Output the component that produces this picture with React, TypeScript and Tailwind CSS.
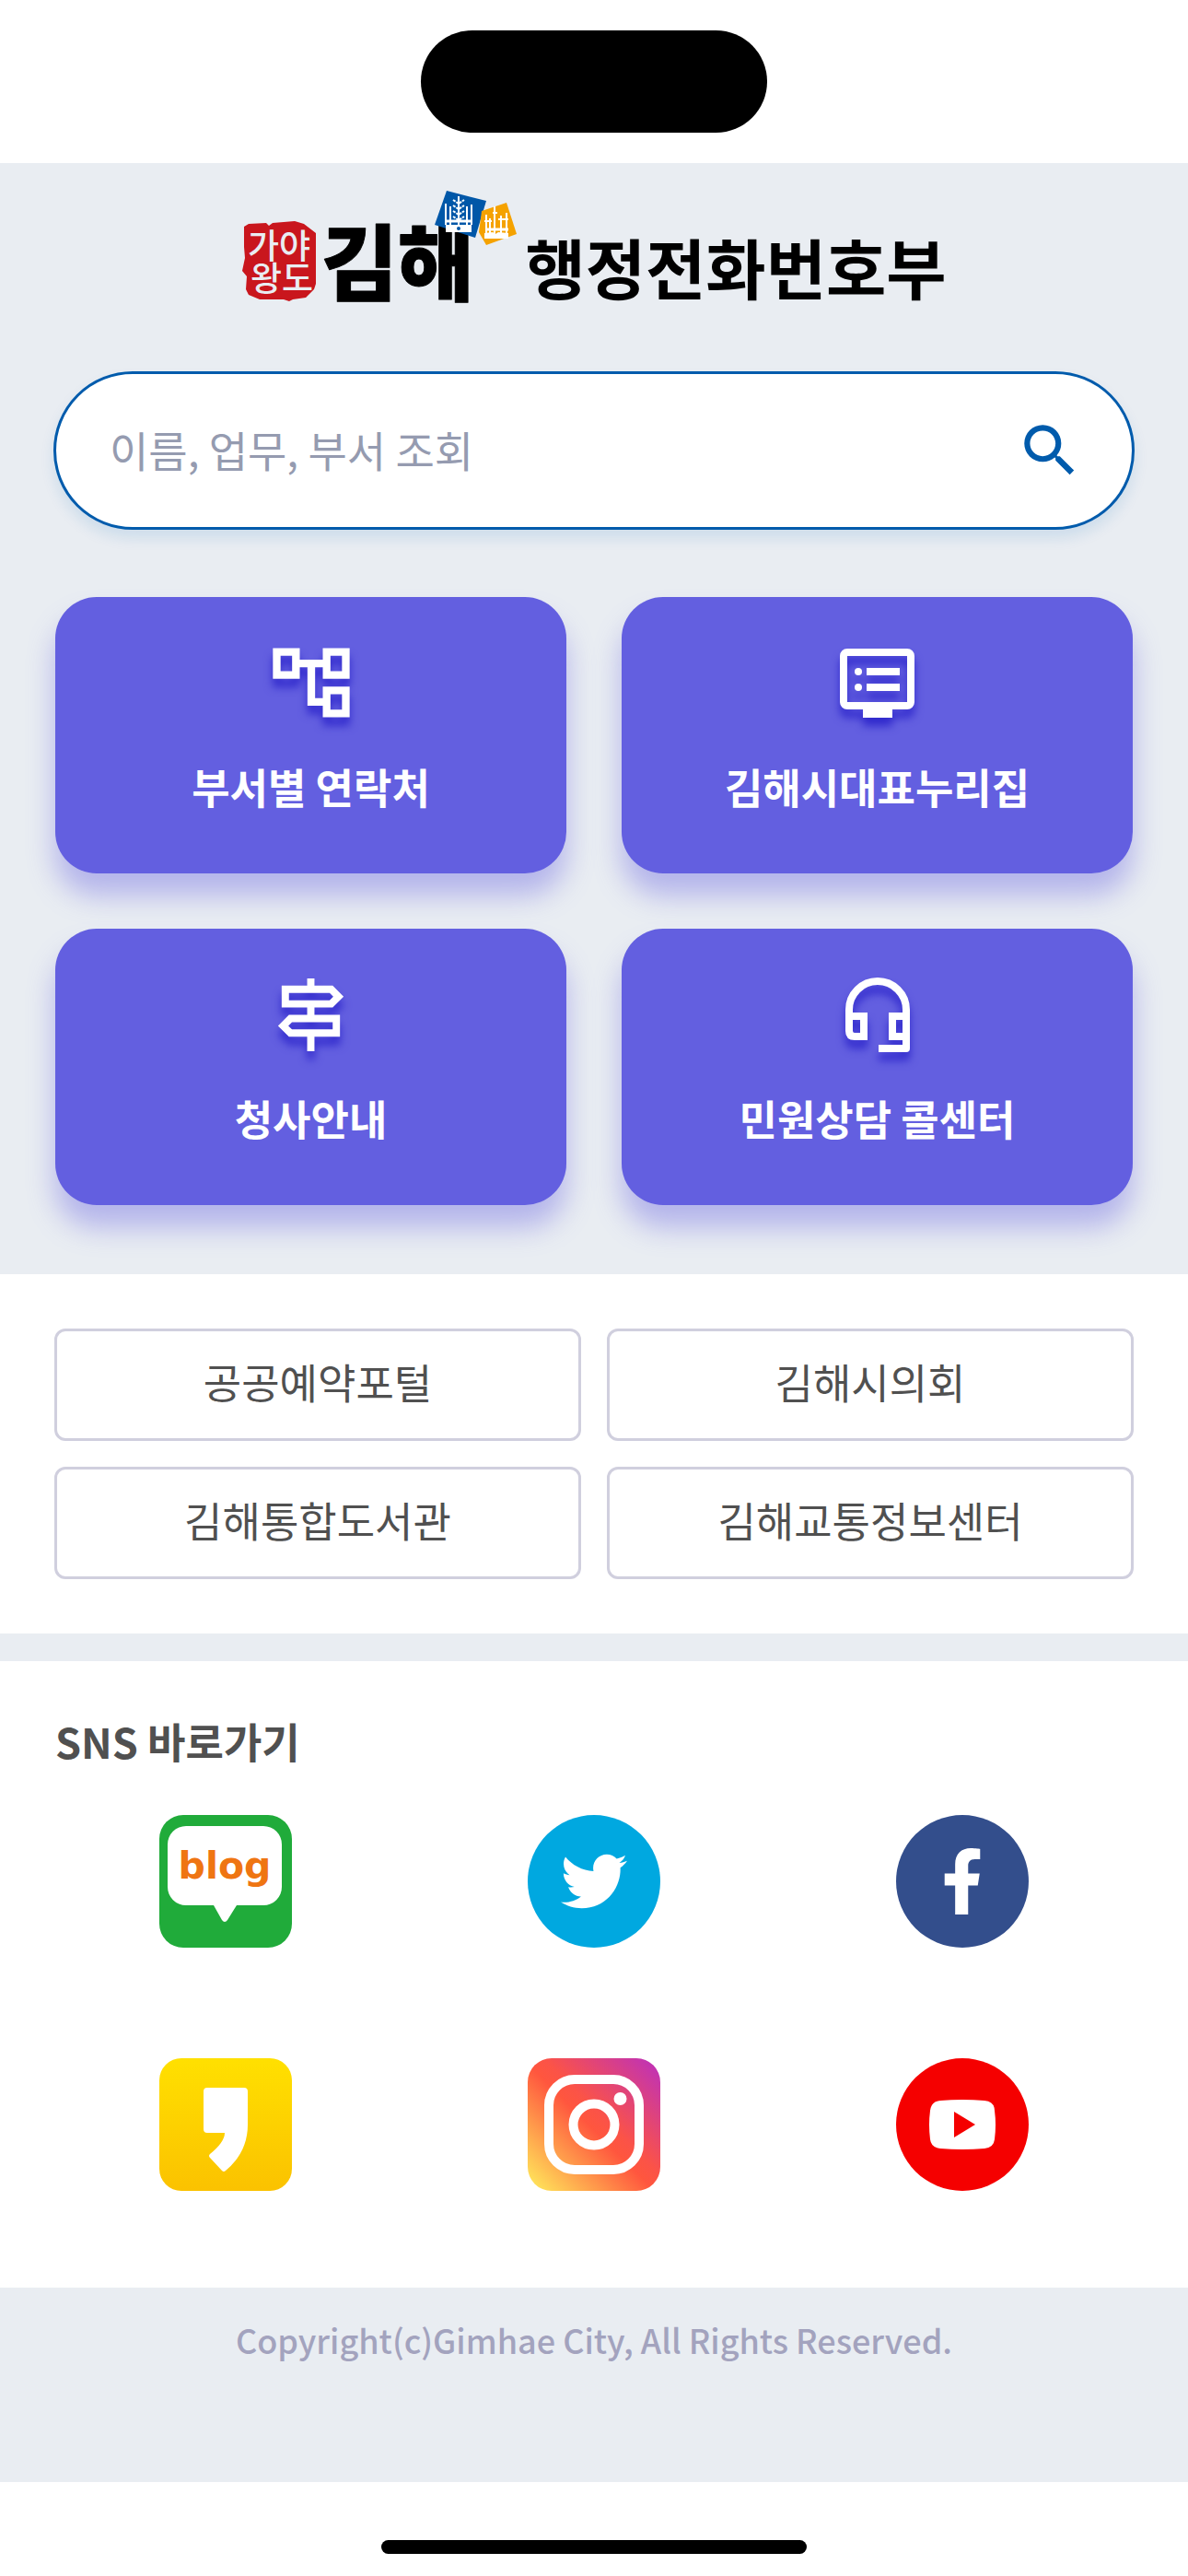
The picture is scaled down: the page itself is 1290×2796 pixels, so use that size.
import type { ReactNode } from "react";
import { FaFacebookF, FaTwitter } from "react-icons/fa";
import { MdOutlineAccountTree, MdOutlineSignpost, MdSearch } from "react-icons/md";

function GimhaeLogo() {
  return (
    <svg width="302" height="144" viewBox="0 0 302 144" aria-label="가야왕도 김해" className="shrink-0">
      {/* Red seal */}
      <path
        d="M3 42L8 39L27 38L30 41L34 38L58 36L68 39L81 49V104L79 110L70 119L56 121L52 123L46 121H20L8 116L5 110L6 96L1 90L4 76L3 64Z"
        fill="#c9161d"
      />
      <text fill="#e9edf2" fontSize="37" fontWeight="500">
        <tspan x="7" y="77">가야</tspan>
        <tspan x="10" y="112">왕도</tspan>
      </text>
      {/* City name */}
      <text x="87" y="115" fontSize="90" fontWeight="900" stroke="#000" strokeWidth="1" strokeLinejoin="round">
        김해
      </text>
      {/* Blue tile */}
      <path d="M223 3L266 14L254 54L210 40Z" fill="#0057a8" />
      <g fill="none" stroke="#fff" strokeWidth="2">
        <path d="M236 9V44M222 17V40M227 20V40M245 20V41M250 18V40" />
        <path d="M230 13l6 4 6-4M230 19l6 4 6-4M230 25l6 4 6-4M230 31l6 4 6-4" strokeDasharray="3 1" />
        <path d="M223 36h26" strokeWidth="3" />
      </g>
      <path d="M222 40h28v8h-28z" fill="#fff" />
      <circle cx="236" cy="44" r="2" fill="#0057a8" />
      {/* Orange tile */}
      <path d="M261 25L288 16L299 50L266 62L258 48Z" fill="#f5a200" />
      <g fill="none" stroke="#fff" strokeWidth="2">
        <path d="M275 20V50M266 29V50M270 33V50M282 30V50M288 27V50" />
        <path d="M264 36h8M273 27h5M279 34h11" />
        <path d="M265 45h25" strokeWidth="3" />
      </g>
      <path d="M264 49l9-1 3 2 3-2 11 1v6h-26z" fill="#fff" />
    </svg>
  );
}

function BoardIcon() {
  return (
    <svg width="81" height="75" viewBox="0 0 81 75" fill="#fff">
      <rect x="4" y="4" width="73" height="58" rx="4" fill="none" stroke="#fff" strokeWidth="8" />
      <path d="M25 65h32v10H25zM29 21h36v8H29zM29 38h36v8H29z" />
      <circle cx="20" cy="25" r="4" />
      <circle cx="20" cy="42" r="4" />
    </svg>
  );
}

function HeadsetIcon() {
  return (
    <svg width="70" height="81" viewBox="0 0 70 81" fill="none" stroke="#fff" strokeWidth="8">
      <path d="M4 42V35a31 31 0 0 1 62 0V77H36" strokeLinejoin="round" />
      <path d="M4 42H20V64H10q-6 0-6-6zM66 42H51V64H66" />
    </svg>
  );
}

function BlogIcon() {
  return (
    <svg viewBox="0 0 144 144" className="size-36">
      <rect width="144" height="144" rx="26" fill="#20ab3a" />
      <path
        d="M29 12H113a20 20 0 0 1 20 20V78a20 20 0 0 1-20 20H84L74 114q-3 4-6 0L59 98H29A20 20 0 0 1 9 78V32A20 20 0 0 1 29 12Z"
        fill="#fff"
      />
      <text x="71" y="69" textAnchor="middle" fontSize="41" fontWeight="700" fill="#ef7512" fontFamily="DejaVu Sans, sans-serif">
        blog
      </text>
    </svg>
  );
}

function KakaoStoryIcon() {
  return (
    <svg viewBox="0 0 144 144" className="size-36">
      <defs>
        <linearGradient id="story" x1="0" y1="0" x2="0" y2="1">
          <stop offset="0" stopColor="#ffe000" />
          <stop offset="1" stopColor="#fbc200" />
        </linearGradient>
      </defs>
      <rect width="144" height="144" rx="24" fill="url(#story)" />
      <path d="M52 32H92q4 0 4 4V72Q96 102 72 122q-2 2-4 0L55 108q-2-2 0-4Q71 91 71 81H52q-4 0-4-4V36q0-4 4-4Z" fill="#fff" />
    </svg>
  );
}

function InstagramIcon() {
  return (
    <svg viewBox="0 0 144 144" className="size-36">
      <defs>
        <linearGradient id="insta" x1="0" y1="1" x2="1" y2="0">
          <stop offset="0.04" stopColor="#ffe35a" />
          <stop offset="0.48" stopColor="#ff563e" />
          <stop offset="0.56" stopColor="#fb5347" />
          <stop offset="0.95" stopColor="#c233b2" />
        </linearGradient>
      </defs>
      <rect width="144" height="144" rx="26" fill="url(#insta)" />
      <g fill="none" stroke="#fff" strokeWidth="10">
        <rect x="23" y="23" width="98" height="98" rx="28" />
        <circle cx="72" cy="72" r="22.5" />
      </g>
      <circle cx="100.5" cy="44" r="7" fill="#fff" />
    </svg>
  );
}

function YoutubeIcon() {
  return (
    <svg viewBox="0 0 144 144" className="size-36">
      <circle cx="72" cy="72" r="72" fill="#f50000" />
      <path
        d="M48 46Q72 44 96 46Q107 47 107 57Q109 72 107 88Q106 97 96 98Q72 100 48 98Q38 97 37 88Q35 72 37 57Q38 47 48 46Z"
        fill="#fff"
      />
      <path d="M63 58L86 72L63 86Z" fill="#f50000" />
    </svg>
  );
}

const menus: { label: string; icon: ReactNode }[] = [
  { label: "부서별 연락처", icon: <MdOutlineAccountTree size={100} /> },
  { label: "김해시대표누리집", icon: <BoardIcon /> },
  { label: "청사안내", icon: <MdOutlineSignpost size={95} /> },
  { label: "민원상담 콜센터", icon: <HeadsetIcon /> },
];

const links = ["공공예약포털", "김해시의회", "김해통합도서관", "김해교통정보센터"];

const sns: { name: string; icon: ReactNode }[] = [
  { name: "blog", icon: <BlogIcon /> },
  {
    name: "Twitter",
    icon: (
      <span className="flex size-36 items-center justify-center rounded-full bg-[#00a8e0] text-white">
        <FaTwitter size={72} />
      </span>
    ),
  },
  {
    name: "Facebook",
    icon: (
      <span className="flex size-36 items-center justify-center rounded-full bg-[#334e8c] text-white">
        <FaFacebookF size={72} />
      </span>
    ),
  },
  { name: "KakaoStory", icon: <KakaoStoryIcon /> },
  { name: "Instagram", icon: <InstagramIcon /> },
  { name: "YouTube", icon: <YoutubeIcon /> },
];

export default function App() {
  return (
    <div className="flex min-h-screen flex-col bg-white font-['Noto_Sans_CJK_KR',sans-serif] text-[45px] leading-[66px]">
      {/* Status bar */}
      <div className="flex justify-center pt-[33px] pb-[33px]">
        <div className="h-[111px] w-[376px] rounded-full bg-black" />
      </div>

      <header className="bg-[#e9edf2] pt-[27px] pb-[75px]">
        <h1 className="flex items-end justify-center gap-1.5">
          <GimhaeLogo />
          <span className="pb-[18px] text-[71px] leading-[84px] font-bold text-black">행정전화번호부</span>
        </h1>

        <form
          role="search"
          onSubmit={(e) => e.preventDefault()}
          className="mx-[58px] mt-[55px] flex h-[172px] items-center rounded-full border-3 border-[#005bac] bg-white pr-[52px] pl-[58px] shadow-[0_9px_15px_rgba(0,110,190,0.12)]"
        >
          <input
            type="search"
            aria-label="이름, 업무, 부서 조회"
            placeholder="이름, 업무, 부서 조회"
            className="min-w-0 flex-1 bg-transparent pb-1 text-[46px] text-[#959bb0] outline-none placeholder:text-[#959bb0]"
          />
          <button type="submit" aria-label="검색" className="text-[#005bac]">
            <MdSearch size={74} />
          </button>
        </form>

        <nav className="mx-[60px] mt-[73px] grid grid-cols-2 gap-[60px]">
          {menus.map((m) => (
            <a
              key={m.label}
              href="#"
              className="flex h-[300px] flex-col items-center rounded-[45px] bg-[#635fe0] pt-[43px] font-bold text-white shadow-[0_24px_30px_rgba(99,95,224,0.4)]"
            >
              <span className="flex h-[100px] items-center drop-shadow-[0_9px_5px_#3029cc]">{m.icon}</span>
              <span className="mt-[30px]">{m.label}</span>
            </a>
          ))}
        </nav>
      </header>

      <nav className="grid grid-cols-2 gap-7 p-[59px]">
        {links.map((l) => (
          <a
            key={l}
            href="#"
            className="flex h-[122px] items-center justify-center rounded-xl border-3 border-[#d0cfde] pb-1.5 text-[#505050]"
          >
            {l}
          </a>
        ))}
      </nav>

      <section className="border-t-30 border-[#e9edf2] px-[45px] pb-[105px]">
        <h2 className="px-[15px] pt-[54px] font-bold text-[#505050]">SNS 바로가기</h2>
        <div className="mt-[47px] grid grid-cols-3 justify-items-center gap-y-[120px]">
          {sns.map((s) => (
            <a key={s.name} href="#" aria-label={s.name}>
              {s.icon}
            </a>
          ))}
        </div>
      </section>

      <footer className="flex-1 bg-[#e9edf2] pt-7 text-center text-[36px] leading-[57px] font-medium text-[#a3a3be]">
        Copyright(c)Gimhae City, All Rights Reserved.
      </footer>

      {/* Home indicator */}
      <div className="flex justify-center pt-[63px] pb-6">
        <div className="h-[15px] w-[462px] rounded-full bg-black" />
      </div>
    </div>
  );
}
